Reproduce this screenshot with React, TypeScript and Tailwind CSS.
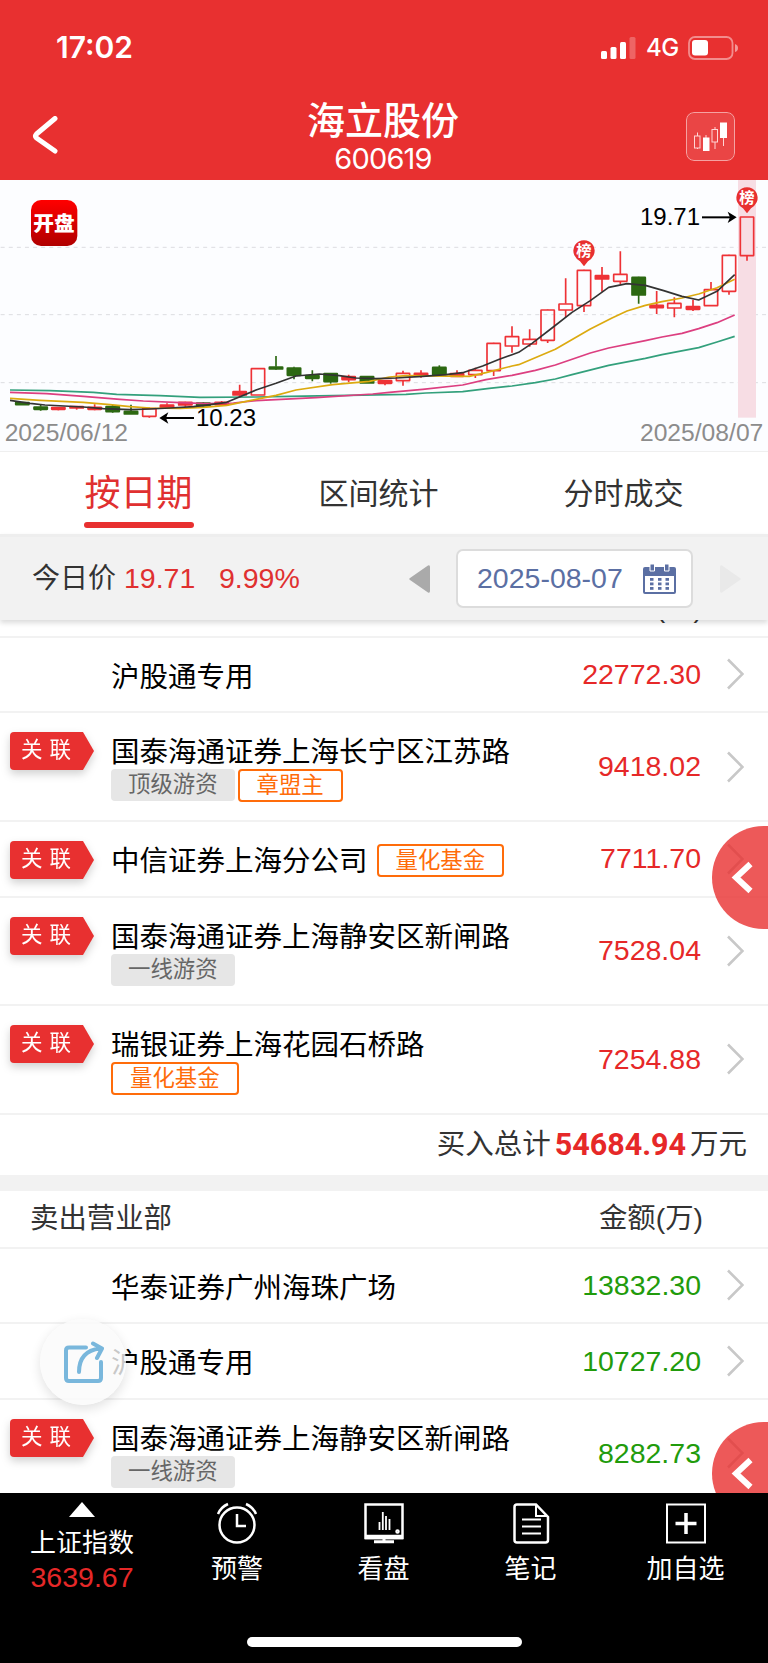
import type { ReactNode } from "react";

type Candle = [x: number, high: number, top: number, bottom: number, low: number, down?: boolean];

// Chart units are a third of a pixel.
const candles: Candle[] = [
  [67, 685, 685, 692, 692, true],
  [122, 693, 698, 706, 710, true],
  [175, 700, 700, 706, 709],
  [230, 697, 697, 702, 707],
  [284, 691, 699, 706, 709],
  [338, 692, 697, 713, 716, true],
  [393, 692, 711, 720, 720, true],
  [448, 701, 703, 727, 731],
  [501, 688, 692, 701, 703],
  [556, 683, 684, 693, 698],
  [610, 684, 686, 696, 698, true],
  [665, 681, 684, 692, 695],
  [719, 632, 652, 663, 668],
  [774, 583, 583, 663, 663],
  [828, 546, 578, 585, 587, true],
  [882, 578, 581, 604, 616, true],
  [937, 589, 604, 613, 622, true],
  [992, 598, 598, 623, 629, true],
  [1046, 602, 607, 617, 625],
  [1101, 607, 607, 627, 627, true],
  [1155, 619, 619, 628, 634],
  [1209, 590, 597, 620, 635],
  [1263, 589, 597, 606, 611],
  [1318, 574, 579, 602, 602, true],
  [1371, 589, 598, 607, 607],
  [1426, 581, 588, 602, 612],
  [1481, 506, 507, 590, 606],
  [1536, 457, 487, 516, 536],
  [1589, 466, 495, 510, 518],
  [1643, 406, 407, 499, 507],
  [1697, 313, 389, 408, 429],
  [1752, 287, 288, 395, 414],
  [1806, 279, 304, 315, 353],
  [1861, 232, 300, 322, 330],
  [1916, 308, 309, 363, 389, true],
  [1970, 351, 393, 401, 420],
  [2023, 370, 387, 402, 430],
  [2079, 377, 397, 406, 411],
  [2133, 324, 346, 395, 395],
  [2187, 242, 243, 352, 362],
  [2241, 128, 128, 245, 260],
];

const averages = [
  {
    color: "#33a07c",
    points:
      "30,648 150,650 280,655 350,661 480,665 600,670 768,669 868,667 1218,661 1278,657 1388,653 1468,643 1536,636 1606,626 1666,615 1716,602 1826,574 1936,553 1986,542 2096,521 2151,504 2204,487",
  },
  {
    color: "#dc3f80",
    points:
      "30,655 140,659 250,667 360,676 430,681 540,686 620,689 700,687 768,680 948,671 1118,660 1168,655 1268,646 1388,633 1458,617 1536,604 1606,589 1666,573 1771,537 1826,522 1936,500 1986,489 2046,478 2096,464 2151,446 2204,423",
  },
  {
    color: "#dcaa10",
    points:
      "30,673 120,679 250,685 330,692 390,698 450,702 540,703 610,700 680,694 768,676 828,664 888,648 998,632 1108,622 1168,609 1218,605 1408,607 1458,596 1536,576 1556,572 1666,526 1771,465 1836,432 1881,411 1936,394 1986,383 2046,372 2096,360 2151,341 2204,316",
  },
  {
    color: "#333333",
    points:
      "30,679 90,688 135,693 250,699 310,704 390,707 448,705 510,702 580,698 630,692 680,685 768,648 828,628 888,606 958,600 1018,605 1068,612 1128,614 1188,612 1268,607 1338,602 1388,596 1448,576 1498,556 1536,542 1556,535 1596,508 1656,462 1716,415 1771,380 1826,340 1881,329 1936,334 1991,350 2046,367 2096,378 2151,352 2204,302",
  },
];

function Pin({ x, y }: { x: number; y: number }) {
  return (
    <g>
      <path
        d={`M${x - 29} ${y + 14}a32 32 0 1 1 58 0q-6 12-17 18L${x} ${y + 47}l-12-15q-11-6-17-18z`}
        fill="#e83030"
      />
      <text x={x} y={y + 16} textAnchor="middle" fontSize="46" fontWeight="700" fill="#fff">
        榜
      </text>
    </g>
  );
}

function Chart() {
  return (
    <svg className="block h-[271px] w-full bg-[#fcfdff]" viewBox="0 18 2304 813">
      {[220, 422, 626].map((y) => (
        <line
          key={y}
          x1="2"
          x2="2304"
          y1={y}
          y2={y}
          stroke="#dcdde1"
          strokeWidth="3"
          strokeDasharray="12 12.3"
        />
      ))}
      <rect x="2214" y="18" width="54" height="713" fill="#f7dde4" />
      {candles.map(([x, high, top, bottom, low, down]) => {
        const color = down ? "#2c6812" : "#ee3236";
        const hollow = !down && bottom - top > 11;
        return (
          <g key={x} stroke={color} strokeWidth="5">
            <path d={`M${x} ${high}V${top}M${x} ${bottom}V${low}`} />
            <rect
              x={x - 20}
              y={top + 1}
              width="40"
              height={bottom - top - 1}
              rx="1"
              fill={hollow ? "none" : color}
            />
          </g>
        );
      })}
      {averages.map((line) => (
        <polyline
          key={line.color}
          points={line.points}
          fill="none"
          stroke={line.color}
          strokeWidth="5"
          strokeLinejoin="round"
        />
      ))}
      <Pin x={1752} y={230} />
      <Pin x={2241} y={71} />
      <g stroke="#000" strokeWidth="6" fill="none">
        <path d="M490 732h92" />
        <path d="M2106 130h92" />
      </g>
      <path d="M478 732l27-17-7 17 7 17z" />
      <path d="M2210 130l-27-17 7 17-7 17z" />
      <g fontSize="72">
        <text x="588" y="756">10.23</text>
        <text x="1920" y="153">19.71</text>
      </g>
      <g fontSize="74" fill="#8c8c8c">
        <text x="14" y="801">2025/06/12</text>
        <text x="2290" y="801" textAnchor="end">2025/08/07</text>
      </g>
      <defs>
        <linearGradient id="logo" x1="0" y1="0" x2="0" y2="1">
          <stop offset="0" stopColor="#ff0000" />
          <stop offset="1" stopColor="#b00000" />
        </linearGradient>
      </defs>
      <rect x="93" y="78" width="139" height="138" rx="30" fill="url(#logo)" />
      <text x="162" y="171" textAnchor="middle" fontSize="62" fontWeight="900" fill="#fff">
        开盘
      </text>
    </svg>
  );
}

function StatusBar() {
  return (
    <div className="flex h-[95px] items-center justify-between pr-[30px] pl-14 font-['Inter',sans-serif] text-white">
      <span className="text-[30px] font-semibold">17:02</span>
      <div className="flex items-center">
        <svg width="35" height="22" fill="#fff">
          <rect y="14" width="6" height="8" rx="1.5" />
          <rect x="9.5" y="10" width="6" height="12" rx="1.5" />
          <rect x="19" y="5" width="6" height="17" rx="1.5" />
          <rect x="28.5" width="6" height="22" rx="1.5" opacity=".25" />
        </svg>
        <span className="ml-[10px] w-[33px] text-[24px] font-medium tracking-[-0.5px]">4G</span>
        <svg className="ml-[9px]" width="50" height="24">
          <rect x="1" y="1" width="43.5" height="22" rx="6" fill="none" stroke="#fff" strokeWidth="1.8" opacity=".45" />
          <rect x="4" y="4" width="16" height="15.5" rx="3" fill="#fff" />
          <path d="M47 8q3 1 3 4t-3 4z" fill="#fff" opacity=".5" />
        </svg>
      </div>
    </div>
  );
}

function Header() {
  return (
    <header className="h-[180px] shrink-0 bg-[#e83030]">
      <StatusBar />
      <div className="flex h-[82px] items-center justify-between pr-[33px] pl-[31px] text-white">
        <svg width="49" height="40" fill="none" stroke="#fff" strokeWidth="5" strokeLinecap="round" strokeLinejoin="round">
          <path d="M24 2.5L5.5 18Q3.500 20 5.500 22L24 35" />
        </svg>
        <div className="flex flex-col items-center">
          <h1 className="text-[38px] leading-[46px] font-medium">海立股份</h1>
          <p className="font-['Inter',sans-serif] text-[29px] leading-[30px] tracking-[-0.8px]">600619</p>
        </div>
        <svg className="rounded-lg bg-white/10" width="49" height="49">
          <rect x=".5" y=".5" width="48" height="48" rx="7.5" fill="none" stroke="#fff" opacity=".5" />
          <g stroke="#ffd6d6" fill="none">
            <path d="M11.500 20.500V24M11.500 36v1M20 23v3M29 15v2M29 30v7M37.500 25v9" />
            <rect x="8.500" y="24" width="5.500" height="12" />
            <rect x="26" y="17.500" width="5.500" height="12.500" />
          </g>
          <path d="M17 25.500h6.500V39H17zM34 10.500h7V26h-7z" fill="#fff" />
        </svg>
      </div>
    </header>
  );
}

function Tabs() {
  return (
    <nav className="flex h-[83px] shrink-0 border-t border-[#efefef] pl-[23px] text-[30px] text-[#333]">
      <div className="flex w-[231px] flex-col items-center pt-[14px] text-[36px] text-[#e03030]">
        <span className="leading-[56px]">按日期</span>
        <span className="h-[6px] w-[110px] rounded-full bg-[#e83030]" />
      </div>
      <div className="flex w-[249px] justify-center pt-[17px] leading-[50px]">区间统计</div>
      <div className="flex w-[241px] justify-center pt-[17px] leading-[50px]">分时成交</div>
    </nav>
  );
}

function CalendarIcon() {
  return (
    <svg width="33" height="32" fill="#5b6fa3">
      <path fillRule="evenodd" d="M2 4h29q2 0 2 2v23q0 2-2 2H2q-2 0-2-2V6q0-2 2-2zm0 9v16h29V13z" />
      <path d="M7 1h4.500v7H7zM21.500 1H26v7h-4.500z" stroke="#fff" />
      {[7, 15, 22.5].map((x) =>
        [15, 19.5, 24].map((y) => <rect key={`${x}-${y}`} x={x} y={y} width="3.500" height="2.800" />)
      )}
    </svg>
  );
}

function PriceBar() {
  return (
    <div className="z-10 flex h-[86px] shrink-0 items-center border-t-[3px] border-[#eee] bg-[#f2f2f2] pl-8 text-[28.5px] shadow-[0_3px_5px_rgba(0,0,0,0.14)]">
      <span className="w-[92px] text-[28px] text-[#333]">今日价</span>
      <span className="w-[95px] text-[#e03030]">19.71</span>
      <span className="w-[190px] text-[#e03030]">9.99%</span>
      <svg width="21" height="28" fill="#aaa">
        <path d="M19 .5q2-1 2 1.500v24q0 2.500-2 1.500L1 15q-1.500-1 0-2z" />
      </svg>
      <div className="ml-[26px] flex h-[59px] w-[237px] items-center justify-between rounded-[7px] border-2 border-[#dcdcdc] bg-white pr-[15px] pl-[19px] text-[#5b6fa3]">
        <span>2025-08-07</span>
        <CalendarIcon />
      </div>
      <svg className="ml-[27px]" width="21" height="28" fill="#e9e9e9">
        <path d="M2 .5Q0-.5 0 2v24q0 2.500 2 1.500L20 15q1.500-1 0-2z" />
      </svg>
    </div>
  );
}

function Related() {
  return (
    <div className="mt-[19px] flex h-[38px] drop-shadow-[0_4px_4px_rgba(0,0,0,0.18)]">
      <span className="w-[73px] rounded-l-[4px] bg-[#e83030] pl-[11px] text-[21.5px] leading-[37px] tracking-[7px] whitespace-nowrap text-white">
        关联
      </span>
      <svg width="11" height="38" fill="#e83030">
        <path d="M0 0L11 19L0 38z" />
      </svg>
    </div>
  );
}

function Badge({ gray, children }: { gray?: boolean; children: ReactNode }) {
  return gray ? (
    <span className="h-8 rounded-[4px] bg-[#e6e6e6] px-[17px] text-[22.4px] leading-[31px] text-[#666]">{children}</span>
  ) : (
    <span className="h-[33px] rounded-[4px] border-2 border-[#ff6c0a] px-[17px] text-[22.4px] leading-[29px] text-[#ff6c0a]">
      {children}
    </span>
  );
}

type RowProps = {
  name: string;
  amount: string;
  sell?: boolean;
  related?: boolean;
  inline?: ReactNode;
  below?: ReactNode;
};

function Row({ name, amount, sell, related, inline, below }: RowProps) {
  return (
    <div
      className={
        below
          ? "flex h-[108.5px] shrink-0 border-b-2 border-[#f2f2f2]"
          : "flex h-[75.750px] shrink-0 border-b-2 border-[#f2f2f2]"
      }
    >
      <div className="w-[111px] pl-[10px]">{related && <Related />}</div>
      <div className="flex-1 pt-[22px] text-[28.500px] leading-[34px] text-black">
        <div className="flex items-center gap-[9px]">
          <span>{name}</span>
          {inline}
        </div>
        {below && <div className="flex gap-[3px]">{below}</div>}
      </div>
      <div className="flex items-center gap-[26px] pr-[24px]">
        <span className={sell ? "text-[28.500px] text-[#219b0b]" : "text-[28.500px] text-[#e62828]"}>{amount}</span>
        <svg width="17" height="32" fill="none" stroke="#c8c8c8" strokeWidth="2.600">
          <path d="M1 1.500L15.500 16L1 30.500" />
        </svg>
      </div>
    </div>
  );
}

function SectionHead({ label }: { label: string }) {
  return (
    <div className="flex h-[58px] shrink-0 items-center justify-between border-b-2 border-[#f2f2f2] pr-[65px] pl-[30px] text-[28.400px] text-[#333]">
      <span>{label}</span>
      <span>金额(万)</span>
    </div>
  );
}

function SideButton() {
  return (
    <svg width="56" height="103">
      <path d="M56 0H51.500a51.500 51.500 0 0 0 0 103H56z" fill="#e83030" opacity=".8" />
      <path d="M38.500 38L24 51.500L38.500 65" fill="none" stroke="#fff" strokeWidth="6" />
    </svg>
  );
}

function ShareButton() {
  return (
    <div className="flex size-[86px] items-center justify-center rounded-full bg-[#fafafa]/80 shadow-[0_4px_12px_rgba(0,0,0,0.12)]">
      <svg width="42" height="46" fill="none" stroke="#79b7dc" strokeWidth="4" strokeLinecap="round" strokeLinejoin="round">
        <path d="M24 8.500H7Q4 8.500 4 11.500V39q0 3 3 3h29q3 0 3-3V23" />
        <path d="M17 33Q17 12 38 9.500M31 4.500L40 9.500L35 19" />
      </svg>
    </div>
  );
}

function NavItem({ label, width, children }: { label: string; width: string; children: ReactNode }) {
  return (
    <div className={`flex flex-col items-center pt-[9px] ${width}`}>
      <svg width="42" height="42" fill="none" stroke="#fff" strokeWidth="2.500">
        {children}
      </svg>
      <span className="mt-[6px] leading-[38px]">{label}</span>
    </div>
  );
}

function BottomBar() {
  return (
    <footer className="flex h-[170px] shrink-0 flex-col justify-between bg-black pb-4 text-[26px] text-white">
      <div className="flex pl-[7px]">
        <div className="flex w-[150px] flex-col items-center pt-[9px]">
          <svg width="26" height="15" fill="#fff">
            <path d="M13 0L26 15H0z" />
          </svg>
          <span className="mt-[7px] leading-[38px]">上证指数</span>
          <span className="text-[28.500px] leading-[30px] text-[#e62828]">3639.67</span>
        </div>
        <NavItem label="预警" width="w-[160px]">
          <circle cx="21" cy="23" r="17.500" />
          <path d="M2 12Q5 5 12 2M40 12Q37 5 30 2M21 12v12h9" />
        </NavItem>
        <NavItem label="看盘" width="w-[133px]">
          <path d="M2.500 2.500h37V36h-37z" />
          <path d="M2 35h38" strokeWidth="4.500" />
          <path d="M21 36v4M11 39.800h20" strokeWidth="3" />
          <path d="M16.500 20v8M19.800 10v18M23 14v14M26.500 17v11" strokeWidth="1.800" />
          <circle cx="34.500" cy="29.500" r="1" />
        </NavItem>
        <NavItem label="笔记" width="w-[161px]">
          <path d="M7 2.500h19L38 15v23q0 2.500-2.500 2.500H7Q4.500 40.500 4.500 38V5Q4.500 2.500 7 2.500z" />
          <path d="M26 3v11h11M12 17.500h19M12 24.500h19M12 31.500h19" strokeWidth="2" />
        </NavItem>
        <NavItem label="加自选" width="w-[149px]">
          <path d="M2 2.500h38v38H2z" strokeWidth="2" />
          <path d="M21 11v21M10.500 21.500h21" strokeWidth="3.500" />
        </NavItem>
      </div>
      <div className="h-[10px] w-[275px] self-center rounded-full bg-white" />
    </footer>
  );
}

export default function App() {
  return (
    <div className="relative flex h-[1663px] w-[768px] flex-col overflow-hidden bg-white font-['Liberation_Sans','Noto_Sans_CJK_SC',sans-serif]">
      <Header />
      <Chart />
      <Tabs />
      <PriceBar />
      <main className="relative flex min-h-0 flex-1 flex-col overflow-hidden">
        <div className="-mt-[40.500px] flex shrink-0 flex-col">
          <SectionHead label="买入营业部" />
          <Row name="沪股通专用" amount="22772.30" />
          <Row
            related
            name="国泰海通证券上海长宁区江苏路"
            amount="9418.02"
            below={
              <>
                <Badge gray>顶级游资</Badge>
                <Badge>章盟主</Badge>
              </>
            }
          />
          <Row related name="中信证券上海分公司" amount="7711.70" inline={<Badge>量化基金</Badge>} />
          <Row related name="国泰海通证券上海静安区新闸路" amount="7528.04" below={<Badge gray>一线游资</Badge>} />
          <Row related name="瑞银证券上海花园石桥路" amount="7254.88" below={<Badge>量化基金</Badge>} />
          <div className="flex h-[60px] shrink-0 items-center justify-end pr-[21px] text-[28.500px] text-[#333]">
            买入总计
            <strong className="mx-[4px] font-['Roboto',sans-serif] text-[30.500px] font-bold text-[#e62828]">54684.94</strong>
            万元
          </div>
          <div className="h-4 bg-[#f2f2f2]" />
          <SectionHead label="卖出营业部" />
          <Row sell name="华泰证券广州海珠广场" amount="13832.30" />
          <Row sell name="沪股通专用" amount="10727.20" />
          <Row related sell name="国泰海通证券上海静安区新闸路" amount="8282.73" below={<Badge gray>一线游资</Badge>} />
        </div>
        <div className="absolute top-[206px] right-0">
          <SideButton />
        </div>
        <div className="absolute top-[802px] right-0">
          <SideButton />
        </div>
        <div className="absolute top-[699px] left-[40px]">
          <ShareButton />
        </div>
      </main>
      <BottomBar />
    </div>
  );
}
